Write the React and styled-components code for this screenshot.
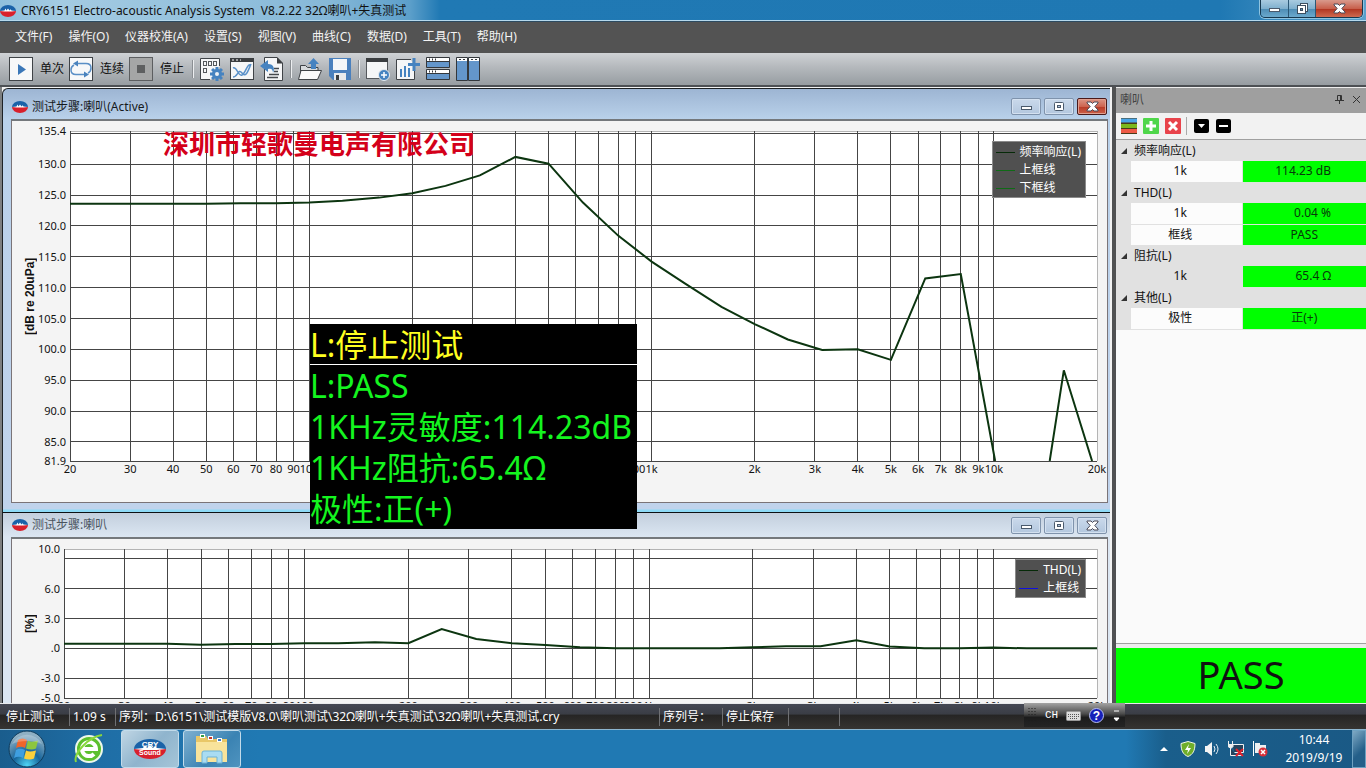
import React from 'react';
import styled, { createGlobalStyle } from 'styled-components';

const GlobalStyle = createGlobalStyle`
  * {
    box-sizing: border-box;
  }
  body {
    margin: 0;
    overflow: hidden;
    font-family: 'Noto Sans', 'Noto Sans CJK SC', sans-serif;
    font-size: 12px;
    line-height: 16px;
    color: #111;
  }
  button {
    font: inherit;
    color: inherit;
    padding: 0;
    border: 0;
    background: none;
  }
  svg {
    display: block;
    flex: none;
  }
`;

const Page = styled.div`
  height: 100vh;
  display: flex;
  flex-direction: column;
  overflow: hidden;
`;

const TitleBar = styled.header`
  position: relative;
  flex: none;
  height: 22px;
  display: flex;
  align-items: center;
  gap: 5px;
  background: linear-gradient(90deg, #8fc0dc 0, #a4cbe2 60px, #86b8d8 330px, #5c9fca 410px, #2079b4 440px, #1f78b3 1220px, #5aa0cb 100%);
  border-bottom: 1px solid #2c4a60;
  box-shadow: inset 0 -1px 0 #b5d8ec;
`;

const AppTitle = styled.h1`
  margin: 0;
  flex: 1;
  font-size: 12px;
  font-weight: 400;
  line-height: 20px;
  white-space: pre;
`;

const CaptionButtons = styled.div`
  align-self: flex-start;
  display: flex;
  height: 18px;
  margin-right: 3px;
  border: 1px solid #16384f;
  border-top: 0;
  border-radius: 0 0 5px 5px;
  overflow: hidden;
  box-shadow: 0 0 0 1px #8fc4e0;
`;

const CaptionButton = styled.button`
  width: ${(p) => (p.$danger ? 47 : 27)}px;
  display: flex;
  align-items: center;
  justify-content: center;
  background: ${(p) =>
    p.$danger
      ? 'linear-gradient(#d99a8c, #c8604c 50%, #b03420 52%, #cf6a50)'
      : 'linear-gradient(#a9cbe0, #7fb0ce 50%, #4d8cb4 52%, #6ba9cd)'};
  & + & {
    border-left: 1px solid #2b5876;
  }
`;

const MenuBar = styled.nav`
  flex: none;
  height: 31px;
  display: flex;
  align-items: center;
  gap: 16px;
  padding: 0 0 2px 15px;
  background: #535353;
  color: #f4f4f4;
`;

const ToolBar = styled.div`
  flex: none;
  height: 34px;
  display: flex;
  align-items: center;
  gap: 6px;
  padding: 0 9px;
  background: linear-gradient(#cfd2d5, #b4b8bc 45%, #979da2);
  border-bottom: 2px solid #4d5054;
`;

const ToolButton = styled.button`
  display: flex;
  align-items: center;
  gap: 7px;
  white-space: nowrap;
`;

const RunGroup = styled.div`
  display: flex;
  gap: 5px;
  margin-right: 2px;
`;

const ToolSeparator = styled.i`
  width: 2px;
  height: 18px;
  background: #eceef0;
  border-left: 1px solid #8b8f93;
`;

const Main = styled.main`
  flex: 1;
  min-height: 0;
  display: flex;
`;

const Workspace = styled.section`
  position: relative;
  flex: 1;
  min-width: 0;
  overflow: hidden;
  padding: 1px 2px 0;
  background: linear-gradient(90deg, #7d7f80 0 2px, #f2f2f2 2px);
`;

const Window = styled.section`
  border-left: 1px solid #1d2226;
  border-top: ${(p) => (p.$active ? '1px solid #1d2226' : '0')};
  border-bottom: 1px solid #0c1114;
  border-radius: ${(p) => (p.$active ? '6px 0 0 0' : '0')};
  padding: 0 2px 9px 8px;
  background: ${(p) =>
    p.$active
      ? 'linear-gradient(#9db5d3, #b9d1ea 30px, #c0d3ec calc(100% - 3px), #8edaf6 calc(100% - 2px))'
      : 'linear-gradient(#c3cfdd, #dbe6f2 24px)'};
`;

const WindowTitle = styled.header`
  display: flex;
  align-items: center;
  gap: 4px;
  height: ${(p) => (p.$active ? 30 : 24)}px;
  padding: ${(p) => (p.$active ? 5 : 0)}px 1px 0;
  color: ${(p) => (p.$active ? '#16191c' : '#4a545e')};
`;

const WindowName = styled.h2`
  margin: 0;
  flex: 1;
  font-size: 12px;
  font-weight: 400;
`;

const WindowButtons = styled.div`
  display: flex;
  gap: 3px;
`;

const WindowButton = styled.button`
  width: 30px;
  height: 17px;
  display: flex;
  align-items: center;
  justify-content: center;
  border: 1px solid ${(p) => (p.$danger ? '#4a1a1a' : '#7f93ac')};
  border-radius: 2px;
  box-shadow: inset 0 0 0 1px ${(p) => (p.$danger ? '#e0a090' : '#d4e1f0')};
  background: ${(p) =>
    p.$danger
      ? 'linear-gradient(#dc9585, #cd6450 50%, #b83a26 52%, #cc6048)'
      : 'linear-gradient(#cad9eb, #b3c7de)'};
`;

const ChartFrame = styled.div`
  display: flex;
  align-items: flex-start;
  padding: 10px 10px ${(p) => (p.$short ? 30 : 41)}px 0;
  border: 1px solid #7a7478;
  border-top: 2px solid #74787c;
  background: #f4f4f4;
`;

const AxisTitle = styled.div`
  flex: none;
  width: 36px;
  height: ${(p) => p.$height}px;
  margin-right: ${(p) => p.$gutter}px;
  writing-mode: vertical-rl;
  transform: rotate(180deg);
  text-align: center;
  line-height: 36px;
  font-family: 'Liberation Sans', Arial, sans-serif;
  font-size: 12px;
  font-weight: 700;
`;

const Plot = styled.div`
  position: relative;
  flex: 1;
  height: ${(p) => p.$height}px;
`;

const PlotSvg = styled.svg`
  width: 100%;
  height: 100%;
  overflow: visible;
  font-size: 11px;
`;

const Banner = styled.div`
  position: absolute;
  left: 93px;
  top: 0;
  font-size: 26px;
  line-height: 26px;
  font-weight: 700;
  color: #d4001a;
`;

const Legend = styled.ul`
  position: absolute;
  top: 10px;
  right: 11px;
  margin: 0;
  padding: 1px 4px 0 3px;
  list-style: none;
  border: 1px solid #8b8b8b;
  background: #505050;
  color: #fff;
`;

const LegendItem = styled.li`
  display: flex;
  align-items: center;
  gap: 5px;
  line-height: 18px;
  &::before {
    content: '';
    flex: none;
    width: 19px;
    height: 1px;
    background: ${(p) => p.$color};
  }
`;

const ResultBoard = styled.div`
  position: absolute;
  left: 310px;
  top: 237px;
  width: 327px;
  background: #000;
  color: #14f51f;
  font-size: 32px;
  line-height: 41px;
  white-space: nowrap;
`;

const BoardHead = styled.div`
  height: 41px;
  color: #ffff20;
  border-bottom: 1px solid #fff;
`;

const SidePanel = styled.aside`
  flex: none;
  width: 254px;
  display: flex;
  flex-direction: column;
  border-left: 4px solid #505152;
  background: #fafafa;
`;

const PanelHead = styled.header`
  height: 26px;
  display: flex;
  align-items: center;
  gap: 8px;
  padding: 0 5px 2px 4px;
  border-top: 1px solid #eee;
  background: #9f9f9f;
  color: #444;
`;

const PanelName = styled.h2`
  margin: 0;
  flex: 1;
  font-size: 12px;
  font-weight: 400;
`;

const PanelTools = styled.div`
  height: 27px;
  display: flex;
  align-items: center;
  gap: 6px;
  padding-left: 5px;
  background: #f2f2f2;
  border-bottom: 1px solid #a0a0a0;
`;

const PanelDivider = styled.i`
  width: 1px;
  height: 18px;
  margin: 0 1px 0 -1px;
  background: #aaa;
`;

const ResultTable = styled.table`
  width: 100%;
  table-layout: fixed;
  border-collapse: collapse;
  background: #e1e1e1;
  td,
  th {
    height: 21px;
    padding: 0;
    font-weight: 400;
    line-height: 16px;
  }
`;

const GroupCell = styled.th`
  text-align: left;
`;

const GroupToggle = styled.button`
  display: flex;
  align-items: center;
  gap: 7px;
  padding-left: 5px;
`;

const NameCell = styled.td`
  padding-right: 12px !important;
  text-align: center;
  background: ${(p) => (p.$selected ? '#e1e1e1' : '#fcfcfc')};
  border-bottom: 1px solid #e1e1e1;
  border-right: 1px solid #e1e1e1;
`;

const ValueCell = styled.td`
  background: #00ff00;
  color: #07380a;
  border-bottom: 1px solid #d9e8d9;
  text-align: ${(p) => (p.$numeric ? 'right' : 'center')};
  padding-right: ${(p) => (p.$numeric ? 35 : 0)}px !important;
`;

const Verdict = styled.div`
  height: 60px;
  margin-top: auto;
  display: flex;
  align-items: center;
  justify-content: center;
  border-top: 1px solid #a0a0a0;
  box-shadow: inset 0 4px 0 #ececec;
  background: #00ff00;
  font-size: 38px;
  line-height: 60px;
`;

const StatusBar = styled.footer`
  position: relative;
  flex: none;
  height: 26px;
  display: flex;
  align-items: center;
  border-top: 1px solid #e9eaec;
  background: linear-gradient(#454853, #3a3d45 40%, #262524 45%, #363432);
  color: #fff;
`;

const StatusField = styled.div`
  flex: none;
  width: ${(p) => p.$width}px;
  height: 18px;
  line-height: 18px;
  padding-left: ${(p) => (p.$first ? 6 : 3)}px;
  border-right: 1px solid #6f7073;
  white-space: nowrap;
`;

const LanguageBar = styled.div`
  position: absolute;
  right: 241px;
  top: -1px;
  width: 101px;
  height: 24px;
  display: flex;
  align-items: center;
  gap: 8px;
  padding-left: 4px;
  background: linear-gradient(#a4a4a4, #4c4c4c 45%, #1c1c1c 60%, #242424);
  color: #fff;
  font-family: 'Liberation Mono', monospace;
  font-size: 11px;
`;

const TaskBar = styled.footer`
  flex: none;
  height: 39px;
  display: flex;
  align-items: center;
  border-top: 1px solid #8db6d0;
  background: linear-gradient(90deg, #1a5d8d 0, #1f6ea6 100px, #2079b3 260px, #2079b3 calc(100% - 240px), #1a5e8b calc(100% - 200px), #1a5985);
  color: #fff;
`;

const OrbButton = styled.button`
  margin: 0 0 0 8px;
`;

const PinnedButton = styled.button`
  width: 60px;
  margin: 0 2px 0 13px;
  display: flex;
  justify-content: center;
`;

const TaskButton = styled.button`
  width: 58px;
  height: 38px;
  margin-right: 4px;
  display: flex;
  align-items: center;
  justify-content: center;
  border: 1px solid #c2dbea;
  border-radius: 3px;
  background: ${(p) =>
    p.$active ? 'linear-gradient(135deg, #c0d6e4, #8fb4cd 50%, #a5c5d8)' : 'linear-gradient(135deg, #7fb0d0, #3b83b3 60%, #4f94bf)'};
`;

const Tray = styled.div`
  margin-left: auto;
  display: flex;
  align-items: center;
  gap: 8px;
`;

const Clock = styled.time`
  width: 76px;
  text-align: center;
  line-height: 18px;
`;

const ShowDesktop = styled.button`
  width: 14px;
  height: 38px;
  margin-left: -8px;
  border: 1px solid #6ea1c1;
  background: linear-gradient(135deg, #7fa9c4, #245f89 60%);
`;

const CryLogo = ({ width = 16, height = 12, text }) => (
  <svg width={width} height={height} viewBox="0 0 32 20" preserveAspectRatio="none">
    <path d="M0 10a16 10 0 0 1 32 0z" fill="#1a62a8" />
    <path d="M0 10a16 10 0 0 0 32 0z" fill="#d8202c" />
    <path d="M0 10l9-1 2-3 2 3 3-3 3 3 2-2 2 2 9 1-9 1H9z" fill="#fff" />
    {text && (
      <g fill="#fff" fontFamily="Liberation Sans" fontWeight="700" textAnchor="middle">
        <text x="16" y="8" fontSize="8">CRY</text>
        <text x="16" y="16" fontSize="7">Sound</text>
      </g>
    )}
  </svg>
);

const MinGlyph = () => (
  <svg width="13" height="11" viewBox="0 0 13 11">
    <rect x="1.5" y="5.5" width="10" height="3" fill="#fff" stroke="#4a5a6c" />
  </svg>
);

const MaxGlyph = () => (
  <svg width="12" height="11" viewBox="0 0 12 11">
    <rect x="1.5" y="1.5" width="9" height="8" rx="1" fill="#fff" stroke="#4a5a6c" />
    <rect x="4.5" y="4.5" width="3" height="2" fill="#b3c7de" stroke="#4a5a6c" />
  </svg>
);

const RestoreGlyph = () => (
  <svg width="13" height="13" viewBox="0 0 13 13">
    <rect x="4.5" y="1.5" width="7" height="8" fill="#fff" stroke="#3c4f60" />
    <rect x="1.5" y="3.5" width="8" height="8" fill="#fff" stroke="#3c4f60" />
    <rect x="4.5" y="6.5" width="2" height="2" fill="#5a92b8" stroke="#3c4f60" />
  </svg>
);

const CloseGlyph = () => (
  <svg width="13" height="11" viewBox="0 0 13 11">
    <path d="M1 1h4l1.500 1.500L8 1h4v1L8.800 5.500 12 9v1H8L6.500 8.500 5 10H1V9l3.200-3.500L1 2z" fill="#fff" stroke="#4a4a58" />
  </svg>
);

const Icon = ({ children }) => (
  <svg width="24" height="24" viewBox="0 0 24 24">
    {children}
  </svg>
);

const PlayIcon = () => (
  <Icon>
    <rect x=".5" y=".5" width="23" height="23" fill="#f7f8f9" stroke="#3f4347" />
    <path d="M9 7l8 5.500L9 18z" fill="#3a77b8" />
  </Icon>
);

const LoopIcon = () => (
  <Icon>
    <rect x=".5" y=".5" width="23" height="23" fill="#f7f8f9" stroke="#3f4347" />
    <g fill="none" stroke="#5a8fc6" strokeWidth="1.500">
      <path d="M7 6.500h10c4 0 5 2 5 4.500s-1 4-3 5M17 17.500H7c-4 0-5-2-5-4.500s1-4 3-5" />
    </g>
    <path d="M9 3.500L4 6.500l5 3zM15 14.500l5 3-5 3z" fill="#4a83be" />
  </Icon>
);

const StopIcon = () => (
  <Icon>
    <rect x=".5" y=".5" width="23" height="23" fill="#a5a6a6" stroke="#5c5e60" />
    <rect x="8" y="8" width="8" height="8" fill="#5e5f60" />
  </Icon>
);

const GearTeeth = [0, 45, 90, 135];

const ConfigIcon = () => (
  <Icon>
    <path d="M.5 22.500V1.500h19V10l-8 12.500z" fill="#f5f6f7" />
    <path d="M10 22.500H.5v-21h19V9" fill="none" stroke="#3f4347" />
    <g fill="none" stroke="#54585c">
      <rect x="3.500" y="4.500" width="3" height="4" />
      <rect x="8.500" y="4.500" width="3" height="4" />
      <rect x="13.500" y="4.500" width="3" height="4" />
      <rect x="3.500" y="11.500" width="3" height="4" />
    </g>
    <g stroke="#4683c0" strokeWidth="3">
      {GearTeeth.map((a) => (
        <path key={a} d="M17 10v14" transform={`rotate(${a} 17 17)`} />
      ))}
    </g>
    <circle cx="17" cy="17" r="3.500" fill="#eef1f4" stroke="#4683c0" strokeWidth="3" />
  </Icon>
);

const CurveIcon = () => (
  <Icon>
    <rect x=".5" y="1.500" width="23" height="21" fill="#f5f6f7" stroke="#3f4347" />
    <rect y="1" width="24" height="4" fill="#3a3d40" />
    <path d="M2 3h2M6 3h2M10 3h1" stroke="#fff" />
    <path d="M3 20c5 0 5-9 9-4s6-2 9-9M3 11c4-2 5 9 9 7s5-12 9-10" fill="none" stroke="#5a91c9" strokeWidth="1.500" />
  </Icon>
);

const ReportIcon = () => (
  <Icon>
    <path d="M4.500 .5H17l5.500 5.500v17.500h-18z" fill="#f5f6f7" stroke="#3f4347" />
    <path d="M17 0v6.500h6z" fill="#3a3d40" />
    <path d="M14 11.500h5M14 14.500h4M9 17.500h10M7 20.500h11" stroke="#45494d" strokeWidth="1.500" />
    <path d="M0 9l8-6v4c6 0 7 5 5 9 0-4-2-5-5-4v3z" fill="#4683c0" />
  </Icon>
);

const OpenIcon = () => (
  <Icon>
    <path d="M2.500 22V8.500h5l2 2H20v4" fill="#d7dadc" stroke="#3f4347" />
    <path d="M.5 22.500L3 13.500h20.500l-4 9z" fill="#fafafa" stroke="#3f4347" />
    <path d="M13 12V7h-3l5.500-6L21 7h-3v5z" fill="#4683c0" />
  </Icon>
);

const SaveIcon = () => (
  <Icon>
    <path d="M1 1h22v22H5l-4-4z" fill="#4a80bd" />
    <rect x="5" y="2" width="14" height="11" fill="#f4f6f8" />
    <rect x="6" y="16" width="12" height="7" fill="#e8eaec" />
    <rect x="8" y="18" width="3" height="5" fill="#3a3d40" />
  </Icon>
);

const AddWindowIcon = () => (
  <Icon>
    <rect x=".5" y="1.500" width="21" height="20" fill="#f5f6f7" stroke="#54585c" />
    <rect y="1" width="22" height="4" fill="#3a3d40" />
    <circle cx="18" cy="18" r="5.500" fill="#4683c0" stroke="#e6eaee" />
    <path d="M18 15v6M15 18h6" stroke="#fff" strokeWidth="1.500" />
  </Icon>
);

const AddChartIcon = () => (
  <Icon>
    <path d="M15 2.500H.5v20h18V11" fill="#f5f6f7" stroke="#3f4347" />
    <path d="M5 12v8M9 9v11M13 11v9" stroke="#4683c0" strokeWidth="2" />
    <path d="M18 1v13M12 7.500h12" stroke="#4683c0" strokeWidth="3" />
  </Icon>
);

const TileRowsIcon = () => (
  <Icon>
    <path d="M.5 .5h23v10H.5zM.5 12.500h23v10H.5z" fill="#6496ca" stroke="#34383c" />
    <path d="M1 2.500h22M1 14.500h22" stroke="#fff" strokeWidth="3" />
    <path d="M.5 4.500h23M.5 16.500h23" stroke="#34383c" />
    <path d="M3 2.500h1M6 2.500h1M9 2.500h1M3 14.500h1M6 14.500h1M9 14.500h1" stroke="#34383c" strokeWidth="2" />
  </Icon>
);

const TileColsIcon = () => (
  <Icon>
    <path d="M.5 .5h11v23H.5zM12.500 .5h11v23h-11z" fill="#6496ca" stroke="#34383c" />
    <path d="M1 2.500h10M13 2.500h10" stroke="#fff" strokeWidth="3" />
    <path d="M3 2.500h2M7 2.500h2M15 2.500h2M19 2.500h2" stroke="#34383c" />
  </Icon>
);

const menus = ['文件(F)', '操作(O)', '仪器校准(A)', '设置(S)', '视图(V)', '曲线(C)', '数据(D)', '工具(T)', '帮助(H)'];

const toolGroups = [
  [
    { name: '测试配置', icon: ConfigIcon },
    { name: '曲线', icon: CurveIcon },
    { name: '报告', icon: ReportIcon },
  ],
  [
    { name: '打开', icon: OpenIcon },
    { name: '保存', icon: SaveIcon },
  ],
  [
    { name: '新建窗口', icon: AddWindowIcon },
    { name: '新建图表', icon: AddChartIcon },
    { name: '水平平铺', icon: TileRowsIcon },
    { name: '垂直平铺', icon: TileColsIcon },
  ],
];

const response = [
  [
    [20, 123.6], [50, 123.6], [63, 123.7], [80, 123.7], [100, 123.8], [125, 124.1], [160, 124.6],
    [200, 125.3], [250, 126.5], [315, 128.2], [400, 131.2], [500, 130.1], [630, 123.8], [800, 118.4],
    [1000, 114.23], [1250, 110.7], [1600, 106.9], [2000, 104.1], [2500, 101.6], [3150, 99.9],
    [4000, 100], [5000, 98.3], [6300, 111.5], [8000, 112.2], [10080, 81.9],
  ],
  [[14550, 81.9], [16000, 96.6], [19350, 81.9]],
];

const distortion = [
  [
    [20, 0.45], [40, 0.45], [50, 0.35], [63, 0.43], [80, 0.43], [100, 0.52], [125, 0.52], [160, 0.62],
    [200, 0.52], [250, 1.95], [315, 0.95], [400, 0.52], [500, 0.33], [630, 0.12], [800, 0.02],
    [1000, 0], [1600, 0], [2000, 0.1], [2500, 0.22], [3150, 0.22], [4000, 0.82], [5000, 0.18],
    [6300, 0], [8000, 0], [10000, 0.08], [12500, 0], [20000, 0],
  ],
];

const freqTicks = [
  20, 30, 40, 50, 60, 70, 80, 90, 100, 200, 300, 400, 500, 600, 700, 800, 900,
  1000, 2000, 3000, 4000, 5000, 6000, 7000, 8000, 9000, 10000, 20000,
];

const levelTicks = [135.4, 130, 125, 120, 115, 110, 105, 100, 95, 90, 85, 81.9];
const percentTicks = [10, 6, 3, 0, -3, -5];

const freqPos = (f) => Math.log10(f / 20) / 3;
const freqText = (f) => (f >= 1000 ? `${f / 1000}k` : `${f}`);
const valueText = (v) => (v === 0 ? '.0' : v.toFixed(1));

const Chart = ({ unit, height, gutter, min, max, ticks, grid, series, legend, short, children }) => {
  const valuePos = (v) => (max - v) / (max - min);
  const pct = (n) => `${n * 100}%`;
  return (
    <ChartFrame $short={short}>
      <AxisTitle $height={height} $gutter={gutter}>{unit}</AxisTitle>
      <Plot $height={height}>
        <PlotSvg>
          <rect width="100%" height="100%" fill="#fff" />
          <g stroke="#454545" shapeRendering="crispEdges">
            <line x1="0" x2="100%" y1="0" y2="0" stroke="#b4b4b4" />
            <line x1="100%" x2="100%" y1="0" y2="100%" stroke="#b4b4b4" />
            {freqTicks.slice(0, -1).map((f) => (
              <line key={f} x1={pct(freqPos(f))} x2={pct(freqPos(f))} y1="0" y2="100%" />
            ))}
            {grid.map((v) => (
              <line key={v} x1="0" x2="100%" y1={pct(valuePos(v))} y2={pct(valuePos(v))} />
            ))}
          </g>
          <svg width="100%" height="100%" viewBox="0 0 1000 1000" preserveAspectRatio="none">
            {series.map((points, i) => (
              <polyline
                key={i}
                points={points.map(([f, v]) => `${freqPos(f) * 1000},${valuePos(v) * 1000}`).join(' ')}
                fill="none"
                stroke="#0c3510"
                strokeWidth="2"
                vectorEffect="non-scaling-stroke"
              />
            ))}
          </svg>
          <g fill="#111" textAnchor="end">
            {ticks.map((v) => (
              <text key={v} x="-4" y={pct(valuePos(v))} dy="4">{valueText(v)}</text>
            ))}
          </g>
          <g fill="#111" textAnchor="middle">
            {freqTicks.map((f) => (
              <text key={f} x={pct(freqPos(f))} y="100%" dy="12">{freqText(f)}</text>
            ))}
          </g>
        </PlotSvg>
        {children}
        <Legend>
          {legend.map((item) => (
            <LegendItem key={item.name} $color={item.color}>{item.name}</LegendItem>
          ))}
        </Legend>
      </Plot>
    </ChartFrame>
  );
};

const ChartWindow = ({ name, active, children }) => (
  <Window $active={active}>
    <WindowTitle $active={active}>
      <CryLogo />
      <WindowName>{name}</WindowName>
      <WindowButtons>
        <WindowButton aria-label="最小化"><MinGlyph /></WindowButton>
        <WindowButton aria-label="最大化"><MaxGlyph /></WindowButton>
        <WindowButton aria-label="关闭" $danger={active}><CloseGlyph /></WindowButton>
      </WindowButtons>
    </WindowTitle>
    {children}
  </Window>
);

const results = [
  { group: '频率响应(L)', rows: [{ name: '1k', value: '114.23 dB', numeric: true }] },
  {
    group: 'THD(L)',
    rows: [
      { name: '1k', value: '0.04 %', numeric: true },
      { name: '框线', value: 'PASS' },
    ],
  },
  { group: '阻抗(L)', rows: [{ name: '1k', value: '65.4 Ω', numeric: true, selected: true }] },
  { group: '其他(L)', rows: [{ name: '极性', value: '正(+)' }] },
];

const GutterCol = styled.col`
  width: 15px;
`;

const NameCol = styled.col`
  width: 111px;
`;

const Results = () => (
  <ResultTable>
    <colgroup>
      <GutterCol />
      <NameCol />
      <col />
    </colgroup>
    {results.map(({ group, rows }) => (
      <tbody key={group}>
        <tr>
          <GroupCell colSpan={3}>
            <GroupToggle>
              <svg width="6" height="6" viewBox="0 0 6 6"><path d="M6 0v6H0z" fill="#333" /></svg>
              {group}
            </GroupToggle>
          </GroupCell>
        </tr>
        {rows.map((row) => (
          <tr key={row.name}>
            <td />
            <NameCell $selected={row.selected}>{row.name}</NameCell>
            <ValueCell $numeric={row.numeric}>{row.value}</ValueCell>
          </tr>
        ))}
      </tbody>
    ))}
  </ResultTable>
);

const PanelButtons = () => (
  <PanelTools>
    <button aria-label="颜色">
      <svg width="16" height="16" viewBox="0 0 16 16">
        <rect width="16" height="16" fill="#4a3a18" />
        <path d="M0 2.500h16" stroke="#4aa5e6" strokeWidth="4" />
        <path d="M0 8h16" stroke="#7cb81c" strokeWidth="4" />
        <path d="M0 13h16" stroke="#ee5a45" strokeWidth="4" />
      </svg>
    </button>
    <button aria-label="添加">
      <svg width="16" height="16" viewBox="0 0 16 16">
        <rect width="16" height="16" rx="1" fill="#4fd64a" />
        <path d="M8 3v10M3 8h10" stroke="#fff" strokeWidth="3" />
      </svg>
    </button>
    <button aria-label="删除">
      <svg width="16" height="16" viewBox="0 0 16 16">
        <rect width="16" height="16" rx="1" fill="#e8434b" />
        <path d="M4 4l8 8M12 4l-8 8" stroke="#fff" strokeWidth="3" />
      </svg>
    </button>
    <PanelDivider />
    <button aria-label="展开">
      <svg width="16" height="16" viewBox="0 0 16 16">
        <rect y="1" width="15" height="14" rx="2" fill="#000" />
        <path d="M4 6h7l-3.500 4z" fill="#fff" />
      </svg>
    </button>
    <button aria-label="折叠">
      <svg width="16" height="16" viewBox="0 0 16 16">
        <rect y="1" width="15" height="14" rx="2" fill="#000" />
        <path d="M3 8h9" stroke="#fff" strokeWidth="2" />
      </svg>
    </button>
  </PanelTools>
);

const StartOrb = () => (
  <svg width="38" height="38" viewBox="0 0 38 38">
    <defs>
      <radialGradient id="orb" cx=".5" cy=".95" r=".85">
        <stop offset="0" stopColor="#4fd5f5" />
        <stop offset=".45" stopColor="#17659b" />
        <stop offset="1" stopColor="#8fb0c4" />
      </radialGradient>
    </defs>
    <circle cx="19" cy="19" r="18" fill="url(#orb)" stroke="#0f3c5c" />
    <path d="M10 10c3-2 6-2 9 0l-2 8c-3-2-6-1.500-9 0z" fill="#f0652a" />
    <path d="M20 10.500c3 2 6 1 10 0l-2 8c-3 1.500-7 1-10 0z" fill="#8cc63f" />
    <path d="M8 20c3-2 6-1.500 9 0l-2 8c-3-2-6-1.500-9 0z" fill="#3f9fe0" />
    <path d="M18 20.500c3 1.500 6 1 10 0l-2 8c-3 1.500-7 1-10 0z" fill="#fcd03a" />
    <path d="M4 14a16 14 0 0 1 30 0c-8-4-22-4-30 0z" fill="#fff" opacity=".25" />
  </svg>
);

const BrowserIcon = () => (
  <svg width="30" height="30" viewBox="0 0 30 30">
    <circle cx="15" cy="15" r="13" fill="#5cc02e" stroke="#eef8ea" strokeWidth="2" />
    <path d="M8 15h14a7 7 0 1 0-2 5" fill="none" stroke="#fff" strokeWidth="4" />
    <path d="M2 28C-1 20 14 3 28 1" fill="none" stroke="#8ad83c" strokeWidth="2" />
  </svg>
);

const FolderIcon = () => (
  <svg width="34" height="30" viewBox="0 0 34 30">
    <path d="M1 2h10l2 3h19v22H1z" fill="#e9c767" />
    <path d="M5 0h5v4H5zM13 2h5v4h-5zM22 4h5v4h-5z" fill="#fff" />
    <path d="M6 1h3v2H6z" fill="#35a048" />
    <path d="M14 3h3v2h-3z" fill="#c83828" />
    <path d="M23 5h3v2h-3z" fill="#3878c8" />
    <path d="M1 8h31v20H1z" fill="#f8e39b" />
    <path d="M7 29V19q0-2 2-2h16q2 0 2 2v10h-5v-6H12v6z" fill="#a9dcf2" stroke="#6db3d6" />
  </svg>
);

const TrayIcons = () => (
  <>
    <svg width="16" height="16" viewBox="0 0 16 16"><path d="M4 10l4-4 4 4z" fill="#fff" /></svg>
    <svg width="16" height="16" viewBox="0 0 16 16">
      <path d="M8 .5l7 2c0 7-2 11-7 13-5-2-7-6-7-13z" fill="#6fae2a" stroke="#f0f6e8" />
      <path d="M9 3L5 9h3l-1 4 4-6H8z" fill="#fff" />
    </svg>
    <svg width="16" height="16" viewBox="0 0 16 16">
      <path d="M1 5h2l5-4v14l-5-4H1z" fill="#f4f4f4" />
      <path d="M10 5q2 3 0 6M12 3q4 5 0 10" fill="none" stroke="#e8eef2" />
    </svg>
    <svg width="16" height="16" viewBox="0 0 16 16">
      <path d="M4.500 3.500h11v8h-9M9 14.500h5M2.500 7v7.500h6" fill="#24425c" stroke="#eef2f4" />
      <path d="M.5 0v3M4.500 0v3M0 3.500h5v2l-2 2-3-2z" fill="#eee" stroke="#eee" />
      <path d="M8 8l7 7M15 8l-7 7" stroke="#e0202a" strokeWidth="2" />
    </svg>
    <svg width="16" height="16" viewBox="0 0 16 16">
      <path d="M1.500 0v15" stroke="#fff" />
      <path d="M3 2h5v2h6v8H3z" fill="#eef0f2" />
      <circle cx="11" cy="11" r="4.500" fill="#d8303a" />
      <path d="M9 9l4 4M13 9l-4 4" stroke="#fff" strokeWidth="1.500" />
    </svg>
  </>
);

const App = () => {
  return (
    <Page>
      <GlobalStyle />
      <TitleBar>
        <CryLogo />
        <AppTitle>{'CRY6151 Electro-acoustic Analysis System  V8.2.22 32Ω喇叭+失真测试'}</AppTitle>
        <CaptionButtons>
          <CaptionButton aria-label="最小化"><MinGlyph /></CaptionButton>
          <CaptionButton aria-label="还原"><RestoreGlyph /></CaptionButton>
          <CaptionButton aria-label="关闭" $danger><CloseGlyph /></CaptionButton>
        </CaptionButtons>
      </TitleBar>
      <MenuBar>
        {menus.map((menu) => (
          <button key={menu}>{menu}</button>
        ))}
      </MenuBar>
      <ToolBar>
        <RunGroup>
          <ToolButton><PlayIcon />单次</ToolButton>
          <ToolButton><LoopIcon />连续</ToolButton>
          <ToolButton><StopIcon />停止</ToolButton>
        </RunGroup>
        {toolGroups.map((group, i) => (
          <React.Fragment key={i}>
            <ToolSeparator />
            {group.map(({ name, icon: Glyph }) => (
              <ToolButton key={name} aria-label={name}><Glyph /></ToolButton>
            ))}
          </React.Fragment>
        ))}
      </ToolBar>
      <Main>
        <Workspace>
          <ChartWindow name="测试步骤:喇叭(Active)" active>
            <Chart
              unit="[dB re 20uPa]"
              height={330}
              gutter={22}
              min={81.9}
              max={135.4}
              ticks={levelTicks}
              grid={[135, 130, 125, 120, 115, 110, 105, 100, 95, 90, 85, 81.9]}
              series={response}
              legend={[
                { name: '频率响应(L)', color: '#062a08' },
                { name: '上框线', color: '#0f6a16' },
                { name: '下框线', color: '#0f6a16' },
              ]}
            >
              <Banner>深圳市轻歌曼电声有限公司</Banner>
            </Chart>
          </ChartWindow>
          <ChartWindow name="测试步骤:喇叭">
            <Chart
              unit="[%]"
              height={149}
              gutter={16}
              min={-5}
              max={10}
              ticks={percentTicks}
              grid={[9, 6, 3, 0, -3, -5]}
              series={distortion}
              legend={[
                { name: 'THD(L)', color: '#062a08' },
                { name: '上框线', color: '#1010e0' },
              ]}
              short
            />
          </ChartWindow>
          <ResultBoard>
            <BoardHead>L:停止测试</BoardHead>
            <div>L:PASS</div>
            <div>1KHz灵敏度:114.23dB</div>
            <div>1KHz阻抗:65.4Ω</div>
            <div>极性:正(+)</div>
          </ResultBoard>
        </Workspace>
        <SidePanel>
          <PanelHead>
            <PanelName>喇叭</PanelName>
            <button aria-label="固定">
              <svg width="9" height="9" viewBox="0 0 9 9">
                <path d="M2.500 5V.5h4V5M5.500 0v5M0 5.500h9M4.500 5v4" fill="none" stroke="#333" />
              </svg>
            </button>
            <button aria-label="关闭面板">
              <svg width="9" height="9" viewBox="0 0 9 9">
                <path d="M1 1l7 7M8 1L1 8" stroke="#333" />
              </svg>
            </button>
          </PanelHead>
          <PanelButtons />
          <Results />
          <Verdict>PASS</Verdict>
        </SidePanel>
      </Main>
      <StatusBar>
        <StatusField $width={70} $first>停止测试</StatusField>
        <StatusField $width={46}>1.09 s</StatusField>
        <StatusField $width={544}>序列：D:\6151\测试模版V8.0\喇叭测试\32Ω喇叭+失真测试\32Ω喇叭+失真测试.cry</StatusField>
        <StatusField $width={63}>序列号：</StatusField>
        <StatusField $width={66}>停止保存</StatusField>
        <StatusField $width={51} />
        <LanguageBar>
          <svg width="9" height="14" viewBox="0 0 9 14">
            <path d="M1 0v14M4 0v14M7 0v14" stroke="#1c1c1c" strokeDasharray="1 2" />
          </svg>
          CH
          <svg width="15" height="11" viewBox="0 0 15 11">
            <rect x=".5" y="1.500" width="14" height="9" rx="1" fill="#ddd" stroke="#999" />
            <path d="M2 4.500h11M2 6.500h11M4 8.500h7" stroke="#555" strokeDasharray="1 1" />
          </svg>
          <svg width="15" height="15" viewBox="0 0 15 15">
            <circle cx="7.500" cy="7.500" r="7" fill="#1620b8" stroke="#b8c0f0" />
            <text x="7.500" y="12" fontSize="12" fontWeight="700" fontFamily="Liberation Sans" textAnchor="middle" fill="#fff">?</text>
          </svg>
          <svg width="9" height="14" viewBox="0 0 9 14">
            <path d="M2 3h5M2 10h5l-2.500 3z" fill="#fff" stroke="#fff" />
          </svg>
        </LanguageBar>
      </StatusBar>
      <TaskBar>
        <OrbButton aria-label="开始"><StartOrb /></OrbButton>
        <PinnedButton aria-label="浏览器"><BrowserIcon /></PinnedButton>
        <TaskButton aria-label="CRY Sound" $active><CryLogo width={32} height={20} text /></TaskButton>
        <TaskButton aria-label="文件夹"><FolderIcon /></TaskButton>
        <Tray>
          <TrayIcons />
          <Clock>10:44<br />2019/9/19</Clock>
          <ShowDesktop aria-label="显示桌面" />
        </Tray>
      </TaskBar>
    </Page>
  );
};

export default App;
